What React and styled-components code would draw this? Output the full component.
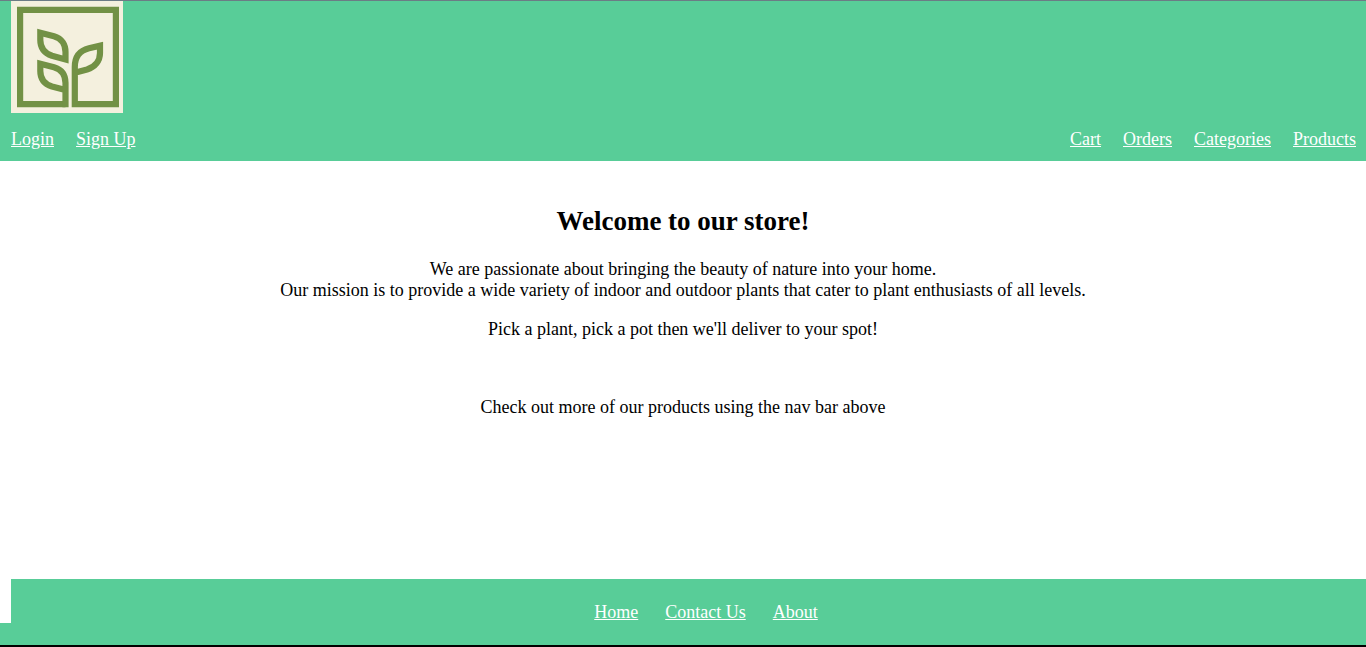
import React from "react";
import styled, { createGlobalStyle } from "styled-components";

const green = "#58cd98";

const GlobalStyle = createGlobalStyle`
  * { box-sizing: border-box; }
  body {
    margin: 0;
    background: #fff;
    color: #000;
    font: 18px/21px "Liberation Serif", "Times New Roman", serif;
  }
`;

const Page = styled.div`
  display: flex;
  flex-direction: column;
  min-height: 100vh;
  border-top: 1px solid #6b7c85;
  border-bottom: 2px solid #000;
`;

const Header = styled.header`
  padding: 0 10px 11px 11px;
  background: ${green};
`;

const HomeLink = styled.a`
  display: block;
  width: 112px;
  height: 112px;
`;

const NavBar = styled.nav`
  display: flex;
  justify-content: space-between;
  margin-top: 16px;
`;

const LinkList = styled.ul`
  display: flex;
  justify-content: center;
  gap: ${({ $gap }) => $gap}px;
  margin: 0;
  padding: 0;
  list-style: none;
`;

const NavLink = styled.a`
  color: #fff;
  text-decoration: underline;
`;

const Main = styled.main`
  flex: 1;
  padding: 44px 11px;
  text-align: center;
`;

const Title = styled.h1`
  margin: 0 0 22px;
  font-size: 27px;
  line-height: 32px;
`;

const Text = styled.p`
  margin: 0 0 ${({ $after }) => $after || 0}px;
`;

const Footer = styled.footer`
  background: linear-gradient(${green}, ${green}) bottom / 100% 22px no-repeat;
  padding-bottom: 22px;
`;

const FooterBar = styled.nav`
  margin-left: 11px;
  padding: 23px 0 0 35px;
  background: ${green};
`;

const Logo = () => (
  <svg viewBox="0 0 112 112" width="112" height="112" role="img" aria-label="Plant store" display="block">
    <rect width="112" height="112" fill="#f4f0de" />
    <g fill="none" stroke="#729145" strokeWidth="6.2">
      <path d="M54.5 103.200H9.100V8.900H104.900V103.200H63.800V66C63.800 55 69 49.500 78 47.300L89 44.700V52C89 60 84 66 76 68.500L63.800 71.700" />
      <path d="M29.300 31.700L43 35.200C51 37.500 54.500 44 54.500 51V58.400L41 54.800C33 52 29.300 46 29.300 39Z" />
      <path d="M54.500 106.300V82C54.500 74.500 51 68.500 43 66.200L29.300 62.700V70C29.300 77 33 83 41 85.500L54.500 89" />
    </g>
  </svg>
);

const Links = ({ items, gap }) => (
  <LinkList $gap={gap}>
    {items.map((item) => (
      <li key={item}>
        <NavLink href="#">{item}</NavLink>
      </li>
    ))}
  </LinkList>
);

export default function App() {
  return (
    <Page>
      <GlobalStyle />
      <Header>
        <HomeLink href="#">
          <Logo />
        </HomeLink>
        <NavBar>
          <Links items={["Login", "Sign Up"]} gap={22} />
          <Links items={["Cart", "Orders", "Categories", "Products"]} gap={22} />
        </NavBar>
      </Header>
      <Main>
        <Title>Welcome to our store!</Title>
        <Text $after={18}>
          We are passionate about bringing the beauty of nature into your home.
          <br />
          Our mission is to provide a wide variety of indoor and outdoor plants that cater to plant
          enthusiasts of all levels.
        </Text>
        <Text $after={57}>Pick a plant, pick a pot then we'll deliver to your spot!</Text>
        <Text>Check out more of our products using the nav bar above</Text>
      </Main>
      <Footer>
        <FooterBar>
          <Links items={["Home", "Contact Us", "About"]} gap={27} />
        </FooterBar>
      </Footer>
    </Page>
  );
}
